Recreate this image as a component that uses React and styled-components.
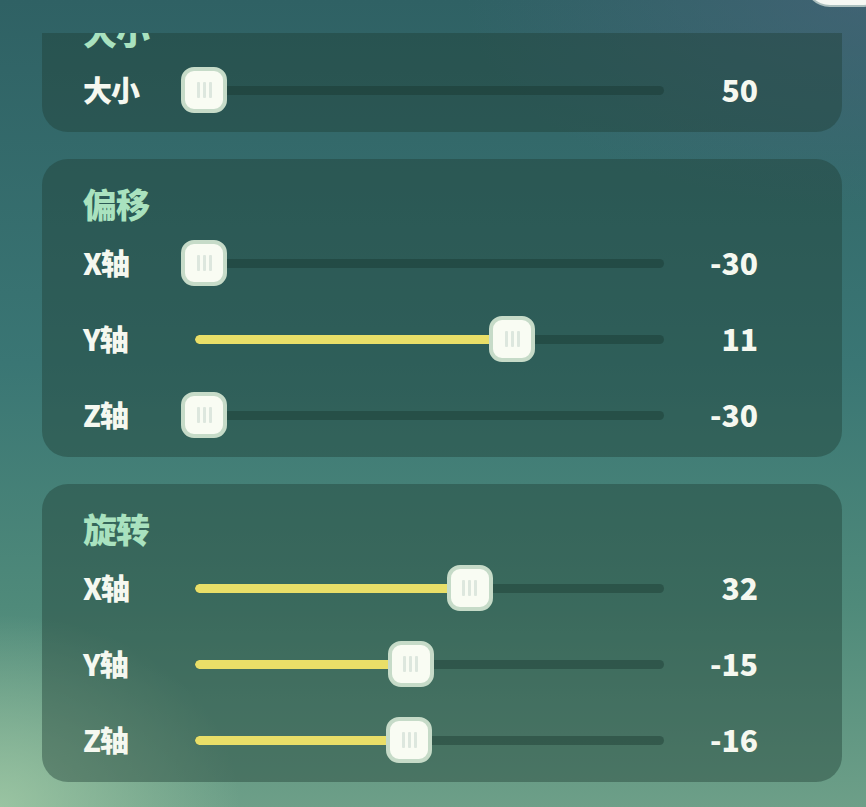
import React, { useLayoutEffect, useRef } from 'react'
import styled, { createGlobalStyle } from 'styled-components'

const GlobalStyle = createGlobalStyle`
	html, body {
		margin: 0;
		height: 100%;
	}
	body {
		font-family: 'Noto Sans CJK SC', 'Noto Sans', sans-serif;
		overflow: hidden;
	}
	#root {
		height: 100%;
	}
`

const groups = [
	{
		title: '大小',
		rows: [{ label: '大小', value: 50, min: 50, max: 200 }],
	},
	{
		title: '偏移',
		rows: [
			{ label: 'X轴', value: -30, min: -30, max: 30 },
			{ label: 'Y轴', value: 11, min: -30, max: 30 },
			{ label: 'Z轴', value: -30, min: -30, max: 30 },
		],
	},
	{
		title: '旋转',
		rows: [
			{ label: 'X轴', value: 32, min: -180, max: 180 },
			{ label: 'Y轴', value: -15, min: -180, max: 180 },
			{ label: 'Z轴', value: -16, min: -180, max: 180 },
		],
	},
]

// thumb travel is inset from the track ends
const TRACK_W = 469
const INSET = 9

export default function App() {
	const listRef = useRef(null)

	useLayoutEffect(() => {
		if (listRef.current) listRef.current.scrollTop = 47
	}, [])

	return (
		<>
			<GlobalStyle />
			<Page>
				<Header>
					<CloseButton />
				</Header>
				<List ref={listRef}>
					{groups.map(g => <Group key={g.title} data={g} />)}
				</List>
			</Page>
		</>
	)
}

function Group({ data }) {
	return (
		<Card>
			<CardTitle>{data.title}</CardTitle>
			<Rows>
				{data.rows.map(r => <SliderRow key={r.label} data={r} />)}
			</Rows>
		</Card>
	)
}

function SliderRow({ data }) {
	const pct = (data.value - data.min) / (data.max - data.min)
	const center = INSET + pct * (TRACK_W - INSET * 2)
	return (
		<Row>
			<Label>{data.label}</Label>
			<Slider>
				<Track>
					<Fill style={{ width: pct > 0 ? center : 0 }} />
				</Track>
				<Thumb style={{ left: center - 23 }}>
					<Grip /><Grip /><Grip />
				</Thumb>
			</Slider>
			<Value>{data.value}</Value>
		</Row>
	)
}

//-----Page-----
const Page = styled.div`
	height: 100%;
	display: flex;
	flex-direction: column;
	background:
		radial-gradient(ellipse 300px 240px at 0% 100%, rgba(165, 205, 168, 0.8), transparent 80%),
		radial-gradient(ellipse 500px 260px at 100% 0%, rgba(75, 100, 125, 0.6), transparent 80%),
		linear-gradient(180deg, #2f6164 0%, #3a7674 45%, #4f8a7a 75%, #6d9f88 100%);
`
const Header = styled.div`
	position: relative;
	height: 33px;
	flex-shrink: 0;
`
const CloseButton = styled.div`
	position: absolute;
	right: -20px;
	bottom: 28px;
	width: 80px;
	height: 48px;
	border-radius: 24px;
	background: #f6f8f4;
	box-shadow: 0 0 0 2px rgba(200, 215, 210, 0.8);
`
const List = styled.div`
	flex: 1;
	overflow-y: auto;
	padding: 0 24px 27px 42px;
	display: flex;
	flex-direction: column;
	gap: 27px;
	scrollbar-width: none;
	&::-webkit-scrollbar {
		display: none;
	}
`

//-----Card-----
const Card = styled.div`
	flex-shrink: 0;
	width: 800px;
	box-sizing: border-box;
	padding: 22px 84px 18px 41px;
	border-radius: 26px;
	background: rgba(30, 62, 52, 0.42);
`
const CardTitle = styled.div`
	height: 48px;
	line-height: 46px;
	font-size: 34px;
	font-weight: 900;
	letter-spacing: -1px;
	color: #a9e2bf;
`
const Rows = styled.div`
	margin-top: 12px;
	display: flex;
	flex-direction: column;
	gap: 30px;
`

//-----Row-----
const Row = styled.div`
	height: 46px;
	display: flex;
	align-items: center;
	line-height: 42px;
`
const Label = styled.div`
	width: 112px;
	flex-shrink: 0;
	padding-bottom: 4px;
	font-size: 29px;
	font-weight: 900;
	letter-spacing: -1px;
	color: #f5f8f0;
`
const Slider = styled.div`
	position: relative;
	width: ${TRACK_W}px;
	height: 46px;
	flex-shrink: 0;
	display: flex;
	align-items: center;
`
const Track = styled.div`
	width: 100%;
	height: 9px;
	margin-top: -1px;
	border-radius: 5px;
	background: rgba(22, 50, 42, 0.38);
	overflow: hidden;
`
const Fill = styled.div`
	height: 100%;
	border-radius: 5px;
	background: #e9df68;
`
const Thumb = styled.div`
	position: absolute;
	top: -1px;
	width: 46px;
	height: 46px;
	box-sizing: border-box;
	border: 4px solid #c6dbc8;
	border-radius: 13px;
	background: #f9fcf3;
	display: flex;
	align-items: center;
	justify-content: center;
	gap: 3px;
`
const Grip = styled.span`
	width: 3px;
	height: 16px;
	border-radius: 1px;
	background: #dde7de;
`
const Value = styled.div`
	flex: 1;
	padding-bottom: 4px;
	text-align: right;
	font-size: 30px;
	font-weight: 900;
	color: #f5f8f0;
`
